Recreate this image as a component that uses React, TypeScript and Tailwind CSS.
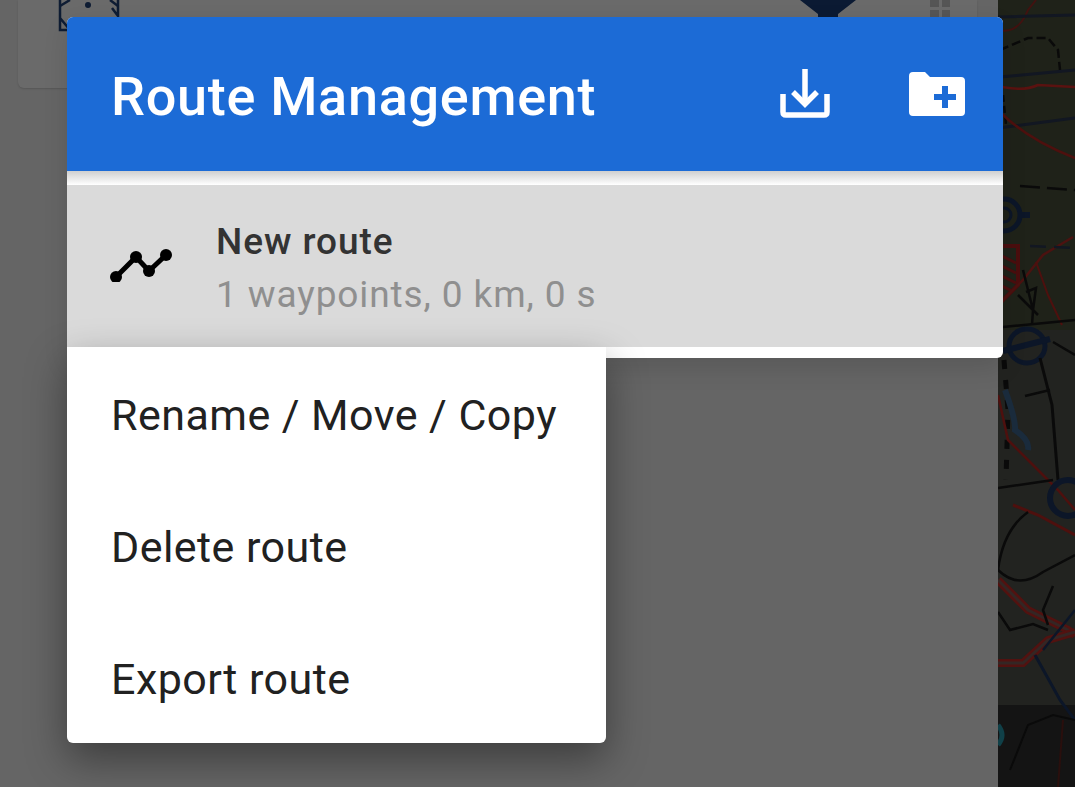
const menuItems = ['Rename / Move / Copy', 'Delete route', 'Export route'];

function MapLayer() {
  return (
    <svg className="h-full w-full blur-[0.5px]" viewBox="0 0 77 787" preserveAspectRatio="none" fill="none">
      <rect width="77" height="787" fill="#222320" />
      <rect y="0" width="77" height="330" fill="#1f2219" />
      <rect y="705" width="77" height="82" fill="#141414" />
      <path d="M0 30 Q20 35 30 10 L38 0" stroke="#421210" strokeWidth="2" />
      <path d="M0 17 L77 15" stroke="#121722" strokeWidth="3" />
      <path d="M2 50 L30 38 L50 38 L60 50 L62 70" stroke="#0a0a0a" strokeWidth="2.5" strokeDasharray="9 4" />
      <path d="M2 77 L77 70" stroke="#121722" strokeWidth="3" />
      <path d="M0 86 Q25 92 40 85 L77 87" stroke="#5a1210" strokeWidth="2.5" />
      <path d="M5 95 L8 125" stroke="#0a0a0a" strokeWidth="2.5" strokeDasharray="7 4" />
      <path d="M0 128 L77 118" stroke="#121722" strokeWidth="3" />
      <path d="M2 112 Q30 140 77 158" stroke="#4e100e" strokeWidth="2.5" />
      <path d="M22 186 L77 190" stroke="#0a0a0a" strokeWidth="2.5" strokeDasharray="20 7" />
      <circle cx="6" cy="215" r="16" stroke="#0c1628" strokeWidth="5" />
      <circle cx="6" cy="215" r="7" stroke="#0c1628" strokeWidth="3" />
      <path d="M22 215 H32" stroke="#0c1628" strokeWidth="6" />
      <path d="M0 246 H20 V285 L0 305" stroke="#4a0e0e" strokeWidth="4" />
      <path d="M2 255 L18 263 M2 265 L18 273 M2 275 L18 283 M2 285 L14 291" stroke="#4a0e0e" strokeWidth="3" />
      <path d="M75 237 L45 255 L25 280 L0 305" stroke="#4c1210" strokeWidth="2.5" />
      <path d="M32 246 L77 248" stroke="#121722" strokeWidth="2.5" strokeDasharray="16 8" />
      <path d="M25 270 L35 310 L34 325 M20 295 L40 315 M28 292 L38 288 L35 310" stroke="#0a0a0a" strokeWidth="2.5" />
      <path d="M38 262 L50 295 L64 325" stroke="#4e100e" strokeWidth="2" />
      <path d="M5 327 L77 320" stroke="#0a0a0a" strokeWidth="2.5" />
      <ellipse cx="29" cy="346" rx="18" ry="17" stroke="#0c1628" strokeWidth="5" />
      <path d="M5 351 L52 339" stroke="#0c1628" strokeWidth="6" />
      <path d="M55 342 L77 355" stroke="#0a0a0a" strokeWidth="2.5" />
      <path d="M42 358 L54 405 L60 480" stroke="#0a0a0a" strokeWidth="3" />
      <path d="M6 360 L10 410 L8 480" stroke="#0a0a0a" strokeWidth="5" strokeDasharray="9 11" />
      <path d="M7 390 Q18 420 17 430 Q32 440 30 450" stroke="#1a2b3c" strokeWidth="6" />
      <path d="M27 396 L52 390" stroke="#0a0a0a" strokeWidth="2.5" />
      <path d="M0 395 L10 440 L35 465 L60 490 L77 510" stroke="#4e100e" strokeWidth="2.5" />
      <path d="M0 488 L55 480" stroke="#0a0a0a" strokeWidth="2.5" />
      <circle cx="70" cy="498" r="18" stroke="#0c1628" strokeWidth="6" />
      <path d="M15 505 L40 515 L77 535" stroke="#4e100e" strokeWidth="3" />
      <path d="M0 570 Q5 530 30 512" stroke="#0a0a0a" strokeWidth="2.5" />
      <path d="M0 570 Q20 590 45 572 L77 555" stroke="#0a0a0a" strokeWidth="2.5" />
      <path d="M0 580 L30 610 L70 630 L77 635" stroke="#521210" strokeWidth="8" />
      <path d="M0 580 L30 610 L70 630 L77 635" stroke="#342624" strokeWidth="3" />
      <path d="M0 663 H25 L50 640 L77 632" stroke="#521210" strokeWidth="8" />
      <path d="M0 663 H25 L50 640 L77 632" stroke="#342624" strokeWidth="3" />
      <path d="M37 655 L62 700 L77 720" stroke="#0c1628" strokeWidth="3" />
      <path d="M77 610 L45 650" stroke="#0c1628" strokeWidth="2.5" />
      <path d="M0 612 L12 630 L35 624 L50 630" stroke="#0a0a0a" strokeWidth="2.5" />
      <path d="M55 586 L45 610 L50 625" stroke="#0a0a0a" strokeWidth="2.5" />
      <path d="M12 770 L30 725 L55 715 L77 720" stroke="#0a0a0a" strokeWidth="2" />
      <path d="M65 720 L60 787" stroke="#2a0f0d" strokeWidth="2" />
      <path d="M0 725 Q8 735 0 745" stroke="#104048" strokeWidth="5" />
    </svg>
  );
}

function DownloadIcon() {
  return (
    <svg width="52" height="52" viewBox="0 0 52 52" fill="none" stroke="white" strokeWidth="5.5">
      <path d="M26 1 V35" />
      <path d="M14 24 L26 36 L38 24" />
      <path d="M4 26 V44 Q4 47 7 47 H45 Q48 47 48 44 V26" />
    </svg>
  );
}

function FolderPlusIcon() {
  return (
    <svg width="56" height="44" viewBox="0 0 56 44">
      <path d="M4 0 H16 L21 5 H52 Q56 5 56 9 V40 Q56 44 52 44 H4 Q0 44 0 40 V4 Q0 0 4 0 Z" fill="white" />
      <path d="M25 25 H47 M36 14 V36" stroke="#1c6bd6" strokeWidth="6" />
    </svg>
  );
}

function RouteIcon() {
  return (
    <svg width="62" height="34" viewBox="0 0 62 34" fill="none">
      <path d="M6 29 L26 9 L39 23 L56 7" stroke="black" strokeWidth="5" />
      <circle cx="6" cy="29" r="6" fill="black" />
      <circle cx="26" cy="9" r="6" fill="black" />
      <circle cx="39" cy="23" r="6" fill="black" />
      <circle cx="56" cy="7" r="6" fill="black" />
    </svg>
  );
}

export default function App() {
  return (
    <div className="relative flex h-[787px] w-[1075px] overflow-hidden bg-[#656565] font-['Roboto',sans-serif]">
      <div className="flex-1 pl-[18px]">
        <div className="relative h-[88px] w-[959px] rounded-b-[6px] bg-[#6a6a6a] shadow-[0_1px_2px_rgba(0,0,0,0.15)]">
          <svg className="absolute left-[40px] top-0" width="64" height="32" viewBox="0 0 64 32" fill="none" stroke="#0e1c33" strokeWidth="2.5">
            <path d="M2 0 V30 H12 L2 18" />
            <path d="M60 0 V16 L54 8" />
            <path d="M12 0 L2 6 M52 0 L60 6" />
            <circle cx="30" cy="5" r="3" fill="#0e1c33" stroke="none" />
          </svg>
          <svg className="absolute left-[782px] top-0" width="58" height="18" viewBox="0 0 58 18">
            <path d="M0 0 H56 L38 14 V18 H18 V14 Z" fill="#0b1a33" />
          </svg>
          <div className="absolute left-[912px] top-0 grid w-[20px] grid-cols-2 gap-[3px]">
            <div className="h-[7px] bg-[#555555]" />
            <div className="h-[7px] bg-[#555555]" />
            <div className="h-[8px] bg-[#555555]" />
            <div className="h-[8px] bg-[#555555]" />
          </div>
        </div>
      </div>
      <div className="h-full w-[77px] shrink-0">
        <MapLayer />
      </div>

      <div className="absolute left-[67px] top-[17px] w-[936px] overflow-hidden rounded-[6px] bg-white pb-[11px] shadow-[0_10px_24px_rgba(0,0,0,0.12)]">
        <header className="flex h-[154px] items-center bg-[#1c6bd6] pl-[44px] pr-[38px]">
          <h1 className="mt-[6px] flex-1 text-[54px] font-medium leading-none tracking-[0.7px] text-white">Route Management</h1>
          <div className="mr-[78px] mt-[0px]">
            <DownloadIcon />
          </div>
          <div>
            <FolderPlusIcon />
          </div>
        </header>
        <div className="h-[14px] bg-gradient-to-b from-[#d0d0d0] to-[#ffffff]" />
        <div className="flex h-[162px] items-start bg-[#dadada]">
          <div className="ml-[43px] mt-[63px] w-[106px] shrink-0">
            <RouteIcon />
          </div>
          <div className="pt-[33px]">
            <div className="text-[37px] font-medium leading-[48px] tracking-[0.95px] text-[#333333]">New route</div>
            <div className="mt-[5px] text-[37px] leading-[48px] tracking-[0.9px] text-[#8f8f8f]">1 waypoints, 0 km, 0 s</div>
          </div>
        </div>
      </div>

      <ul className="absolute left-[67px] top-[347px] h-[396px] w-[539px] rounded-b-[6px] bg-white pt-[2px] shadow-[0_16px_40px_rgba(0,0,0,0.4)]">
        {menuItems.map((item) => (
          <li key={item} className="flex h-[132px] items-center pl-[44px] text-[43px] leading-none tracking-[0.45px] text-[#212121]">
            {item}
          </li>
        ))}
      </ul>
    </div>
  );
}
